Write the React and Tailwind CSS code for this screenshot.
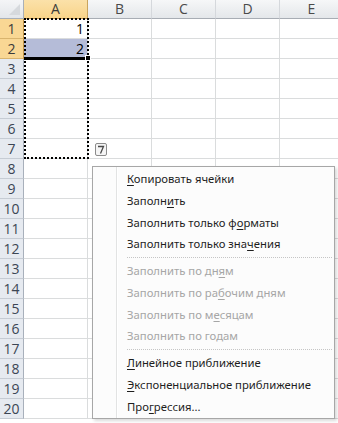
import React from "react";

const cols = ["A", "B", "C", "D", "E"];
const rows = Array.from({ length: 20 }, (_, i) => i + 1);

function U({ children }) {
  return <span className="underline underline-offset-2">{children}</span>;
}

const items = [
  { t: <><U>К</U>опировать ячейки</>, d: false },
  { t: <>Заполн<U>и</U>ть</>, d: false },
  { t: <>Заполнить только ф<U>о</U>рматы</>, d: false },
  { t: <>Заполнить только зна<U>ч</U>ения</>, d: false },
  { sep: true },
  { t: <>Заполнить по дн<U>я</U>м</>, d: true },
  { t: <>Заполнить по ра<U>б</U>очим дням</>, d: true },
  { t: <>Заполнить по м<U>е</U>сяцам</>, d: true },
  { t: <>Заполнить по годам</>, d: true },
  { sep: true },
  { t: <><U>Л</U>инейное приближение</>, d: false },
  { t: <><U>Э</U>кспоненциальное приближение</>, d: false },
  { t: <>Про<U>г</U>рессия...</>, d: false },
];

export default function App() {
  return (
    <div
      className="relative w-[338px] h-[423px] overflow-hidden bg-white"
      style={{ fontFamily: '"Open Sans", "Noto Sans", sans-serif' }}
    >
      {/* header row */}
      <div className="flex h-[19px]">
        <div className="relative w-[24px] shrink-0 bg-gradient-to-b from-[#f4f5f7] to-[#e3e6ea] border-r border-b border-[#a9b0b9] flex items-end justify-end p-[3px]">
          <div className="w-0 h-0 border-l-[11px] border-l-transparent border-b-[11px] border-b-[#d6d9dd]" />
        </div>
        {cols.map((c) => (
          <div
            key={c}
            className={
              "w-[64px] shrink-0 flex items-center justify-center text-[14px] leading-none border-r border-b " +
              (c === "A"
                ? "bg-gradient-to-b from-[#fbe1a9] to-[#f8d48a] border-r-[#c9a45e] border-b-[#c2954a] text-[#3b3b3b]"
                : "bg-gradient-to-b from-[#f6f7f8] to-[#e4e7ea] border-r-[#d5d8dc] border-b-[#a8adb4] text-[#4a4a4a]")
            }
          >
            {c}
          </div>
        ))}
      </div>
      {/* rows */}
      {rows.map((r) => (
        <div key={r} className="flex h-[20px]">
          <div
            className={
              "w-[24px] shrink-0 flex items-center justify-center text-[14px] leading-none border-r border-b " +
              (r <= 2
                ? "bg-[#f9d794] border-r-[#c2954a] border-b-[#d9b46e] text-[#3b3b3b]"
                : "bg-[#e6eaf0] border-r-[#a8b0bb] border-b-[#c6ccd4] text-[#3c4654]")
            }
          >
            {r}
          </div>
          {cols.map((c) => (
            <div
              key={c}
              className={
                "w-[64px] shrink-0 border-r border-b border-[#dadcdd] flex items-center justify-end pr-[3px] text-[14px] leading-none text-black " +
                (c === "A" && r === 2 ? "bg-[#b5bcd8]" : "")
              }
            >
              {c === "A" && r <= 2 ? r : ""}
            </div>
          ))}
        </div>
      ))}

      {/* selection bottom border and fill handle */}
      <div className="absolute left-[24px] top-[57px] w-[62px] h-[3px] bg-black" />
      <div className="absolute left-[85px] top-[55px] w-[6px] h-[6px] bg-black border border-white" />

      {/* marching ants */}
      <div className="absolute left-[24px] top-[18px] w-[65px] h-[141px] border-2 border-dotted border-black" />

      {/* auto fill options button */}
      <div className="absolute left-[95px] top-[143px] w-[12px] h-[13px] rounded-[2px] border border-[#8c8c8c] bg-[#f5f5f5] flex items-center justify-center">
        <svg width="8" height="9" viewBox="0 0 8 9">
          <path d="M1 1.5 H6.5 L3.5 8.5" stroke="#4a4a4a" strokeWidth="1.3" fill="none" />
        </svg>
      </div>

      {/* context menu */}
      <div
        className="absolute left-[92px] top-[166px] w-[243px] h-[253px] border border-[#a7a7a7] bg-[#fcfcfc] pt-[1px] shadow-[2px_2px_3px_rgba(0,0,0,0.15)]"
        style={{ fontFamily: '"Noto Sans", "Open Sans", sans-serif' }}
      >
        <div className="absolute left-[23px] top-0 bottom-0 w-[2px] border-l border-[#e2e3e3] bg-white" />
        {items.map((it, i) =>
          it.sep ? (
            <div key={i} className="h-[5px] flex items-center pl-[34px] pr-[2px]">
              <div className="w-full border-t border-dotted border-[#c5c5c5]" />
            </div>
          ) : (
            <div
              key={i}
              className={
                "h-[21.75px] flex items-center pl-[34px] text-[11.3px] leading-none " +
                (it.d ? "text-[#a6a6a6]" : "text-[#1e1e1e]")
              }
            >
              <span>{it.t}</span>
            </div>
          )
        )}
      </div>
    </div>
  );
}
